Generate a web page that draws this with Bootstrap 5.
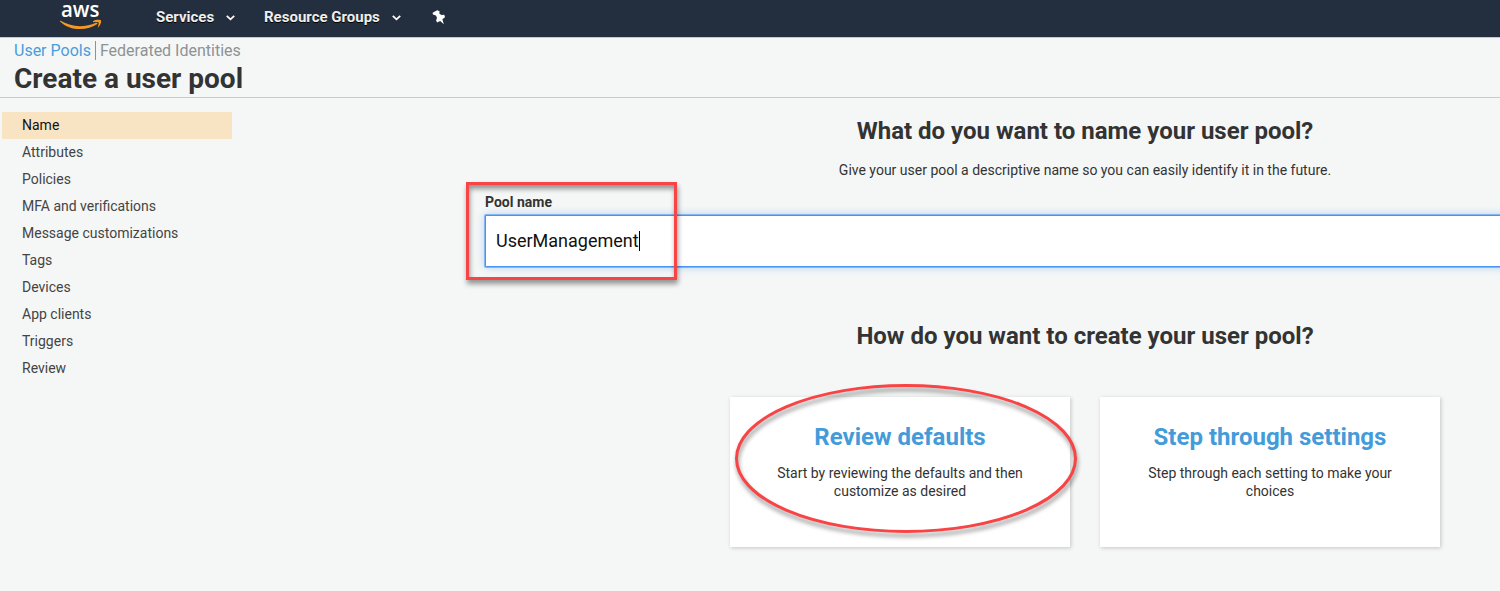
<!DOCTYPE html>
<html lang="en">
<head>
<meta charset="utf-8">
<meta name="viewport" content="width=device-width, initial-scale=1">
<title>Create a user pool</title>
<link href="https://cdn.jsdelivr.net/npm/bootstrap@5.3.0/dist/css/bootstrap.min.css" rel="stylesheet">
<style>
body{font-family:Roboto,"Liberation Sans",sans-serif;font-size:14px;line-height:18px;background:#f5f7f7;color:#333;height:591px}
a{text-decoration:none}
.topbar{height:37px;background:#232f3e;padding-left:60px}
.topbar .nav-link{color:#eee;font-size:15px;font-weight:700;line-height:18px;padding:0 0 4px;text-shadow:0 1px 0 #000}
.topbar .nav-link svg{margin-top:2px}
.logo-link{width:42px;height:37px;margin-right:54px}
.services{width:108px}
.services svg{margin-right:29px}
.groups{width:168px}
.groups svg{margin-right:31px}
.pin{margin-bottom:3px}
.page-head{height:61px;border-top:1px solid #c5c9cb;border-bottom:1px solid #c8cccd;padding-left:14px}
.crumbs{font-size:16px;line-height:19px;margin-top:3px}
.crumbs a{color:#4a9ddb}
.crumbs a+a{color:#8d9294;border-left:1px solid #8d9294;margin-left:4px;padding-left:4px}
h1{font-size:28px;font-weight:700;line-height:32px;margin:3px 0 0;color:#333}
.steps{width:230px;margin:14px 0 0 2px}
.steps .nav-link{padding:0 0 0 20px;height:27px;line-height:27px;color:#444}
.steps .nav-link.active{background:#f8e4c3;color:#111}
.wizard{width:1200px;margin-left:253px;padding-top:18px}
h2{font-size:24px;font-weight:700;line-height:30px;margin:0;color:#333}
.lead-in{margin:15px 0 0;height:18px}
.pool-field{margin-top:14px}
.pool-field label{font-weight:700;line-height:18px;margin:0;display:block}
.pool-field .form-control{height:52px;width:1199px;margin:4px 0 0;padding:0 10px 1px;border:1px solid #4893f0;border-radius:1px;color:#111;font-size:18px;box-shadow:0 0 0 1px #86b7f1,0 0 8px rgba(72,147,230,.45)}
.caret{width:1px;height:20px;background:#000}
.frame-mark{left:-19px;top:-11px;width:211px;height:98px;border:3px solid #f84444;box-shadow:1px 4px 5px rgba(0,0,0,.4),inset 1px 4px 5px rgba(0,0,0,.4)}
.how{margin-top:54px}
.choices{margin-top:46px;gap:30px}
.choice{width:340px;height:150px;border:0;border-radius:0;box-shadow:1px 1px 4px rgba(0,0,0,.2);padding:25px 40px 0;color:#333}
.choice h3{font-size:24px;font-weight:700;line-height:30px;margin:0 0 12px;color:#449bd9}
.choice p{margin:0;line-height:18px}
.oval-mark{left:0;top:-20px;width:360px;height:170px;overflow:visible;filter:drop-shadow(1px 4px 2px rgba(0,0,0,.42))}
</style>
</head>
<body class="overflow-hidden">
<nav class="topbar d-flex align-items-center">
  <a class="logo-link" href="#" aria-label="aws">
    <svg width="42" height="37" viewBox="0 0 42 37" class="d-block overflow-visible">
      <text x="1" y="17.300" font-family="Open Sans, sans-serif" font-weight="600" font-size="22" fill="#fff" textLength="38.500" lengthAdjust="spacingAndGlyphs">aws</text>
      <path d="M.2 20.600C10 26.600 23 28.600 36.500 22.600L37.700 23.800C27 31.200 10 31.200 0 21.400Z" fill="#f7981f"/>
      <path d="M33 21.200C35.500 19.400 40 19.300 41 20.300C41.600 22.200 40.200 26 37.800 27.800C38.200 25.700 39.100 23.300 38.500 22.300C37.300 21.700 35 22 33 22.200Z" fill="#f7981f"/>
    </svg>
  </a>
  <a class="nav-link services d-flex align-items-center" href="#"><span>Services</span>
    <svg class="ms-auto" width="9" height="6" viewBox="0 0 9 6"><path d="M.8.9 4.500 4.300 8.200.9" fill="none" stroke="#fff" stroke-width="1.800"/></svg></a>
  <a class="nav-link groups d-flex align-items-center" href="#"><span>Resource Groups</span>
    <svg class="ms-auto" width="9" height="6" viewBox="0 0 9 6"><path d="M.8.9 4.500 4.300 8.200.9" fill="none" stroke="#fff" stroke-width="1.800"/></svg></a>
  <svg class="pin" width="14" height="15" viewBox="0 0 14 15"><path d="M5.200.3 7.600 1.200 7.300 3.500 9.400 5 12.300 4.700 13 7.200 10.400 9.300 11.800 14.300 8.200 11 5.100 12.400 4.100 10.500 5 7.700 3.900 5.600.9 4.600.6 2.800Z" fill="#fff"/></svg>
</nav>
<header class="page-head">
  <div class="crumbs d-flex"><a href="#">User Pools</a><a href="#">Federated Identities</a></div>
  <h1>Create a user pool</h1>
</header>
<div class="d-flex align-items-start overflow-hidden">
  <nav class="steps nav flex-column flex-shrink-0">
    <a class="nav-link active" href="#">Name</a>
    <a class="nav-link" href="#">Attributes</a>
    <a class="nav-link" href="#">Policies</a>
    <a class="nav-link" href="#">MFA and verifications</a>
    <a class="nav-link" href="#">Message customizations</a>
    <a class="nav-link" href="#">Tags</a>
    <a class="nav-link" href="#">Devices</a>
    <a class="nav-link" href="#">App clients</a>
    <a class="nav-link" href="#">Triggers</a>
    <a class="nav-link" href="#">Review</a>
  </nav>
  <main class="wizard flex-shrink-0 pb-5">
    <h2 class="text-center">What do you want to name your user pool?</h2>
    <p class="lead-in text-center">Give your user pool a descriptive name so you can easily identify it in the future.</p>
    <div class="pool-field position-relative">
      <label>Pool name</label>
      <div class="form-control d-flex align-items-center"><span>UserManagement</span><span class="caret"></span></div>
      <div class="frame-mark position-absolute"></div>
    </div>
    <h2 class="how text-center">How do you want to create your user pool?</h2>
    <div class="choices d-flex justify-content-center">
      <a class="card choice text-center" href="#">
        <h3>Review defaults</h3>
        <p>Start by reviewing the defaults and then customize as desired</p>
        <svg class="oval-mark position-absolute" viewBox="0 0 360 170"><ellipse cx="176" cy="81.500" rx="169.500" ry="73" fill="none" stroke="#f84444" stroke-width="3"/></svg>
      </a>
      <a class="card choice text-center" href="#">
        <h3>Step through settings</h3>
        <p>Step through each setting to make your choices</p>
      </a>
    </div>
  </main>
</div>
<script src="https://cdn.jsdelivr.net/npm/bootstrap@5.3.0/dist/js/bootstrap.bundle.min.js"></script>
</body>
</html>
